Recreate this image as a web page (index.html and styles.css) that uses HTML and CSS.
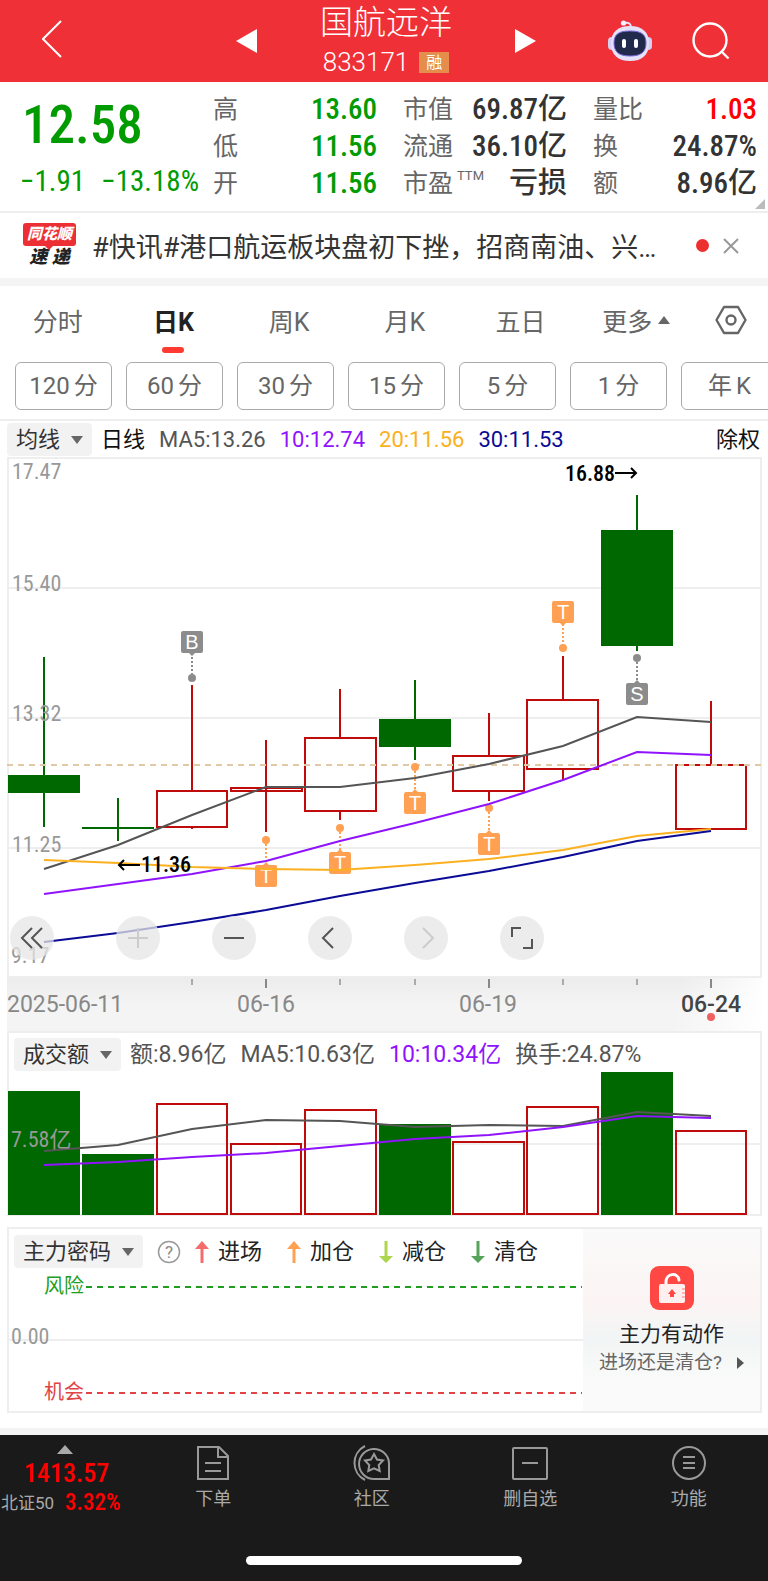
FILE: index.html
```html
<!DOCTYPE html>
<html lang="zh-CN">
<head>
  <meta charset="UTF-8">
  <meta name="viewport" content="width=device-width, initial-scale=1.0">
  <title>国航远洋 833171</title>
  <link rel="stylesheet" href="styles.css">
</head>
<body>
  <header class="topbar">
    <div class="topbar-left">
      <button class="icon-btn" aria-label="返回">
        <svg width="20" height="38" viewBox="0 0 20 38" fill="none" stroke="#fff" stroke-width="2"><path d="M19 1L1 19l18 18"/></svg>
      </button>
    </div>
    <div class="switcher">
      <button class="icon-btn" aria-label="上一只">
        <svg width="21" height="24" viewBox="0 0 21 24" fill="#fff"><path d="M21 0v24L0 12z"/></svg>
      </button>
      <div class="stock">
        <h1>国航远洋</h1>
        <p>833171 <span class="badge">融</span></p>
      </div>
      <button class="icon-btn" aria-label="下一只">
        <svg width="21" height="24" viewBox="0 0 21 24" fill="#fff"><path d="M0 0v24l21-12z"/></svg>
      </button>
    </div>
    <div class="topbar-right">
      <button class="icon-btn" aria-label="智能助手">
        <svg width="46" height="42" viewBox="0 0 46 42">
          <path d="M17 3c4-1 7 0 7 5" fill="none" stroke="#e6e3fa" stroke-width="2"/>
          <circle cx="16.500" cy="3" r="2.600" fill="#f5f3ff"/>
          <rect x="1" y="17" width="8" height="13" rx="4" fill="#d5d0f2"/>
          <rect x="37" y="17" width="8" height="13" rx="4" fill="#d5d0f2"/>
          <path d="M23 6c12 0 19 6 19 17 0 12-7 18-19 18S4 35 4 23C4 12 11 6 23 6z" fill="#e4e1f8"/>
          <path d="M23 11c11 0 16 3 16 12s-5 13-16 13S7 32 7 23s5-12 16-12z" fill="#222a4c" stroke="#7767d8"/>
          <rect x="15" y="19" width="4" height="9" rx="2" fill="#fff"/>
          <rect x="27" y="19" width="4" height="9" rx="2" fill="#fff"/>
        </svg>
      </button>
      <button class="icon-btn" aria-label="搜索">
        <svg width="38" height="38" viewBox="0 0 38 38" fill="none" stroke="#fff" stroke-width="2.400"><circle cx="18" cy="18" r="16.500"/><path d="M29 29l7.500 7.500"/></svg>
      </button>
    </div>
  </header>

  <section class="quote">
    <div class="price green">
      <strong>12.58</strong>
      <p><span>−1.91</span><span>−13.18%</span></p>
    </div>
    <dl class="stats">
      <div><dt>高</dt><dd class="green">13.60</dd></div>
      <div><dt>市值</dt><dd>69.87亿</dd></div>
      <div><dt>量比</dt><dd class="red">1.03</dd></div>
      <div><dt>低</dt><dd class="green">11.56</dd></div>
      <div><dt>流通</dt><dd>36.10亿</dd></div>
      <div><dt>换</dt><dd>24.87%</dd></div>
      <div><dt>开</dt><dd class="green">11.56</dd></div>
      <div><dt>市盈<sup>TTM</sup></dt><dd>亏损</dd></div>
      <div><dt>额</dt><dd>8.96亿</dd></div>
    </dl>
  </section>

  <section class="news">
    <div class="news-logo"><span class="logo-top">同花顺</span><span class="logo-bottom">速 递</span></div>
    <a href="#">#快讯#港口航运板块盘初下挫，招商南油、兴…</a>
    <span class="news-dot"></span>
    <button class="icon-btn" aria-label="关闭">
      <svg width="16" height="16" viewBox="0 0 16 16" stroke="#999" stroke-width="2"><path d="M1 1l14 14M15 1L1 15"/></svg>
    </button>
  </section>

  <nav class="tabs">
    <button>分时</button>
    <button class="active">日K</button>
    <button>周K</button>
    <button>月K</button>
    <button>五日</button>
    <button>更多<i class="up"></i></button>
    <button aria-label="设置">
      <svg width="32" height="30" viewBox="0 0 32 30" fill="none" stroke="#666" stroke-width="2.400"><path d="M9 2h14l7.500 13L23 28H9L1.500 15z" stroke-linejoin="round"/><circle cx="16" cy="15" r="4.500"/></svg>
    </button>
  </nav>

  <div class="periods">
    <button>120<span>分</span></button>
    <button>60<span>分</span></button>
    <button>30<span>分</span></button>
    <button>15<span>分</span></button>
    <button>5<span>分</span></button>
    <button>1<span>分</span></button>
    <button>年<span>K</span></button>
  </div>

  <div class="legend ma-legend">
    <label class="picker"><select aria-label="主图指标"><option>均线</option></select></label>
    <b>日线</b>
    <span>MA5:13.26</span>
    <span class="purple">10:12.74</span>
    <span class="orange">20:11.56</span>
    <span class="navy">30:11.53</span>
    <a href="#">除权</a>
  </div>

  <section class="panel kline">
    <svg class="chart" viewBox="7 457 755 521">
      <g class="grid"><path d="M8 588H761M8 718H761M8 848H761"/></g>
      <g class="axis-text">
        <text x="12" y="479">17.47</text>
        <text x="12" y="591">15.40</text>
        <text x="12" y="852">11.25</text>
        <text x="11" y="963">9.17</text>
      </g>
      <g class="fall">
        <path d="M44 657V827M118 798V841M415 680V760M637 495V651M82 828H154"/>
        <rect x="8" y="775" width="72" height="18"/>
        <rect x="379" y="719" width="72" height="28"/>
        <rect x="601" y="530" width="72" height="116"/>
      </g>
      <g class="rise">
        <path d="M192 685V790M192 827V829M266 740V832M340 689V738M340 811V820M489 713V756M489 791V801M563 656V700M563 769V780M711 701V765"/>
        <rect x="157" y="791" width="70" height="36"/>
        <rect x="231" y="788" width="71" height="3"/>
        <rect x="305" y="738" width="71" height="73"/>
        <rect x="453" y="756" width="71" height="35"/>
        <rect x="527" y="700" width="71" height="69"/>
        <rect x="676" y="765" width="70" height="64"/>
      </g>
      <text class="axis-label" x="12" y="721">13.32</text>
      <path class="last-price" d="M7 765H761"/>

      <g class="marks">
        <g class="mark-gray">
          <path d="M192 653V674"/><circle cx="192" cy="678" r="4"/><path class="box" d="M183 631h18q2 0 2 2v18q0 2-2 2h-6l-3 3-3-3h-6q-2 0-2-2v-18q0-2 2-2z"/><text x="192" y="649">B</text>
          <path d="M637 662V683"/><circle cx="637" cy="658" r="4"/><path class="box" d="M628 705h18q2 0 2-2v-18q0-2-2-2h-6l-3-3-3 3h-6q-2 0-2 2v18q0 2 2 2z"/><text x="637" y="701">S</text>
        </g>
        <g class="mark-orange">
          <path d="M563 624V645"/><circle cx="563" cy="648" r="4"/><path class="box" d="M554 601h18q2 0 2 2v18q0 2-2 2h-6l-3 3-3-3h-6q-2 0-2-2v-18q0-2 2-2z"/><text x="563" y="619">T</text>
          <path d="M266 844V865"/><circle cx="266" cy="840" r="4"/><path class="box" d="M257 887h18q2 0 2-2v-18q0-2-2-2h-6l-3-3-3 3h-6q-2 0-2 2v18q0 2 2 2z"/><text x="266" y="883">T</text>
          <path d="M340 832V853"/><circle cx="340" cy="828" r="4"/><path class="box" d="M331 874h18q2 0 2-2v-18q0-2-2-2h-6l-3-3-3 3h-6q-2 0-2 2v18q0 2 2 2z"/><text x="340" y="870">T</text>
          <path d="M415 771V792"/><circle cx="415" cy="767" r="4"/><path class="box" d="M406 814h18q2 0 2-2v-18q0-2-2-2h-6l-3-3-3 3h-6q-2 0-2 2v18q0 2 2 2z"/><text x="415" y="810">T</text>
          <path d="M489 812V833"/><circle cx="489" cy="808" r="4"/><path class="box" d="M480 855h18q2 0 2-2v-18q0-2-2-2h-6l-3-3-3 3h-6q-2 0-2 2v18q0 2 2 2z"/><text x="489" y="851">T</text>
        </g>
      </g>

      <g class="lines">
        <polyline class="ma5" points="44,869 118,845 192,815 266,787 340,787 415,778 489,764 563,746 637,717 711,722"/>
        <polyline class="ma10" points="44,894 118,884 192,874 266,861 340,841 415,823 489,804 563,780 637,752 711,755"/>
        <polyline class="ma20" points="44,860 118,863 192,867 266,869 340,870 415,865 489,859 563,850 637,836 711,829"/>
        <polyline class="ma30" points="44,942 118,933 192,922 266,910 340,896 415,883 489,871 563,857 637,841 711,831"/>
      </g>

      <g class="extreme">
        <text x="565" y="481">16.88</text><path d="M615 473H636M631 468l5 5-5 5"/>
        <text x="141" y="872">11.36</text><path d="M140 865H119M124 860l-5 5 5 5"/>
      </g>
    </svg>
    <div class="tools">
      <button aria-label="最早"><svg width="24" height="24" viewBox="0 0 24 24"><path d="M12 2L2 12l10 10M22 2L12 12l10 10"/></svg></button>
      <button aria-label="放大" disabled><svg width="24" height="24" viewBox="0 0 24 24"><path d="M2 12h20M12 2v20"/></svg></button>
      <button aria-label="缩小"><svg width="24" height="24" viewBox="0 0 24 24"><path d="M2 12h20"/></svg></button>
      <button aria-label="左移"><svg width="24" height="24" viewBox="0 0 24 24"><path d="M15 2L5 12l10 10"/></svg></button>
      <button aria-label="右移" disabled><svg width="24" height="24" viewBox="0 0 24 24"><path d="M9 2l10 10L9 22"/></svg></button>
      <button aria-label="全屏"><svg width="24" height="24" viewBox="0 0 24 24"><path d="M2 11V2h9M22 13v9h-9"/></svg></button>
    </div>
  </section>

  <div class="dates">
    <svg class="chart" viewBox="7 978 755 53">
      <path class="tick" d="M192 979v6M340 979v6M415 979v6M563 979v6M637 979v6"/>
      <path class="tick-major" d="M266 979v9M489 979v9M711 979v9"/>
      <text x="7" y="1012">2025-06-11</text>
      <text x="266" y="1012" text-anchor="middle">06-16</text>
      <text x="488" y="1012" text-anchor="middle">06-19</text>
      <text class="today" x="711" y="1012" text-anchor="middle">06-24</text>
      <circle cx="711" cy="1017" r="4"/>
    </svg>
  </div>

  <section class="panel volume">
    <div class="legend">
      <label class="picker"><select aria-label="副图指标"><option>成交额</option></select></label>
      <span>额:8.96亿</span>
      <span>MA5:10.63亿</span>
      <span class="purple">10:10.34亿</span>
      <span>换手:24.87%</span>
    </div>
    <svg class="chart" viewBox="7 1071 755 145">
      <g class="grid"><path d="M8 1144H761"/></g>
      <g class="fall">
        <rect x="8" y="1091" width="72" height="124"/>
        <rect x="82" y="1154" width="72" height="61"/>
        <rect x="379" y="1124" width="72" height="91"/>
        <rect x="601" y="1072" width="72" height="143"/>
      </g>
      <g class="rise">
        <rect x="157" y="1104" width="70" height="110"/>
        <rect x="231" y="1144" width="70" height="70"/>
        <rect x="305" y="1110" width="71" height="104"/>
        <rect x="453" y="1142" width="71" height="72"/>
        <rect x="527" y="1107" width="71" height="107"/>
        <rect x="676" y="1131" width="70" height="83"/>
      </g>
      <g class="lines">
        <polyline class="ma5" points="44,1151 118,1145 192,1129 266,1120 340,1121 415,1127 489,1125 563,1126 637,1112 711,1116"/>
        <polyline class="ma10" points="44,1165 118,1162 192,1157 266,1153 340,1146 415,1139 489,1135 563,1127 637,1116 711,1118"/>
      </g>
      <text class="axis-label" x="11" y="1147">7.58亿</text>
    </svg>
  </section>

  <section class="panel force">
    <div class="force-main">
      <div class="legend">
        <label class="picker"><select aria-label="资金指标"><option>主力密码</option></select></label>
        <svg width="24" height="24" viewBox="0 0 24 24"><circle cx="12" cy="12" r="10.500" fill="none" stroke="#999" stroke-width="1.500"/><text x="12" y="18" class="help">?</text></svg>
        <ul class="signals">
          <li><svg width="14" height="22" viewBox="0 0 14 22" fill="#f56c6c"><path d="M7 0l7 8H8.500v14h-3V8H0z"/></svg>进场</li>
          <li><svg width="14" height="22" viewBox="0 0 14 22" fill="#ffa052"><path d="M7 0l7 8H8.500v14h-3V8H0z"/></svg>加仓</li>
          <li><svg width="14" height="22" viewBox="0 0 14 22" fill="#add54d"><path d="M7 22l7-7H8.500V0h-3v15H0z"/></svg>减仓</li>
          <li><svg width="14" height="22" viewBox="0 0 14 22" fill="#57a35b"><path d="M7 22l7-7H8.500V0h-3v15H0z"/></svg>清仓</li>
        </ul>
      </div>
      <svg class="chart" viewBox="7 1268 576 145">
        <g class="grid"><path d="M8 1340H583"/></g>
        <text class="axis-label" x="11" y="1344">0.00</text>
        <g class="risk"><text x="44" y="1293">风险</text><path d="M86 1287H582"/></g>
        <g class="chance"><text x="44" y="1399">机会</text><path d="M86 1393H582"/></g>
      </svg>
    </div>
    <a href="#" class="promo">
      <svg width="46" height="46" viewBox="0 0 46 46">
        <rect x="1" y="1" width="44" height="44" rx="9" fill="#ff4743"/>
        <path d="M17 20v-3C17 8 29 7 30 15" fill="none" stroke="#fff" stroke-width="3" stroke-linecap="round"/>
        <rect x="10" y="19" width="26" height="19" rx="2" fill="#fff0ef"/>
        <path d="M23 24l4 5h-2v3h-4v-3h-2z" fill="#ff4743"/>
        <path d="M33 24h3M33 28h3M33 32h3" stroke="#ffb7b4" stroke-width="2"/>
      </svg>
      <strong>主力有动作</strong>
      <span>进场还是清仓?<i class="next"></i></span>
    </a>
  </section>

  <footer class="bottombar">
    <div class="bottom-nav">
      <a href="#" class="index">
        <i class="up"></i>
        <strong>1413.57</strong>
        <span>北证50<b>3.32%</b></span>
      </a>
      <a href="#">
        <svg width="36" height="36" viewBox="0 0 36 36"><path d="M3 2h21l9 9v23H3zM23 2v10h10M10 18h16M10 26h16"/></svg>
        下单
      </a>
      <a href="#">
        <svg width="38" height="36" viewBox="0 0 38 36"><path d="M36 34V18A15 15 0 1 0 21 34zM12 1A19 19 0 0 0 12 35"/><path d="M21 9l3 5.500 6 1-4.300 4.500 1 6-5.700-2.700-5.700 2.700 1-6-4.300-4.500 6-1z"/></svg>
        社区
      </a>
      <a href="#">
        <svg width="36" height="36" viewBox="0 0 36 36"><rect x="1" y="3" width="34" height="31" rx="1"/><path d="M10 18h16"/></svg>
        删自选
      </a>
      <a href="#">
        <svg width="36" height="36" viewBox="0 0 36 36"><circle cx="18" cy="18" r="16"/><path d="M12 12h12M12 18h12M12 23h12"/></svg>
        功能
      </a>
    </div>
    <div class="home-bar"></div>
  </footer>
</body>
</html>
```
FILE: styles.css
```css
* {
  box-sizing: border-box;
}
body {
  margin: 0;
  background-color: #fff;
  color: #333;
  font-family: Roboto, "Noto Sans CJK SC", sans-serif;
  overflow-x: hidden;
}
h1, p, dl, dd, ul {
  margin: 0;
  padding: 0;
}
button, select {
  font: inherit;
  color: inherit;
  border: 0;
  padding: 0;
  background: none;
}
a {
  color: inherit;
  text-decoration: none;
}
svg {
  display: block;
}
.green { color: #009b00; }
.red { color: #f00; }
.purple { color: #9013fe; }
.orange { color: #fbb020; }
.navy { color: #0b0b96; }

/* top bar */
.topbar {
  display: grid;
  grid-template-columns: 1fr 300px 1fr;
  align-items: center;
  height: 82px;
  padding: 0 38px 0 42px;
  background-color: #f03037;
  color: #fff;
}
.switcher {
  display: flex;
  justify-content: space-between;
  align-items: center;
}
.stock {
  text-align: center;
}
.stock h1 {
  padding-top: 3px;
  font-size: 33px;
  font-weight: 300;
  line-height: 40px;
}
.stock p {
  display: flex;
  justify-content: center;
  align-items: center;
  gap: 10px;
  font-size: 26px;
  font-weight: 300;
  line-height: 39px;
}
.badge {
  padding: 0 7px;
  background-color: #e58d4a;
  font-size: 16px;
  font-weight: 400;
  line-height: 21px;
}
.topbar-right {
  display: flex;
  justify-content: flex-end;
  align-items: center;
  gap: 39px;
}

/* quote */
.quote {
  display: flex;
  position: relative;
  height: 131px;
  padding: 9px 11px 0 0;
  border-bottom: 2px solid #eee;
}
.quote::after {
  content: '';
  position: absolute;
  right: 3px;
  bottom: 2px;
  border: 5px solid;
  border-color: transparent #bbb #bbb transparent;
}
.price {
  width: 213px;
  padding: 0 14px 0 20px;
  font-family: "Roboto Condensed", "Noto Sans CJK SC", sans-serif;
}
.price strong {
  display: block;
  padding-left: 2px;
  font-size: 53px;
  font-weight: 500;
  line-height: 69px;
}
.price p {
  display: flex;
  justify-content: space-between;
  font-size: 29px;
  line-height: 43px;
}
.stats {
  flex: 1;
  display: grid;
  grid-template-columns: repeat(3, 1fr);
  grid-auto-rows: 37px;
  column-gap: 26px;
}
.stats div {
  display: flex;
  justify-content: space-between;
  line-height: 37px;
}
.stats dt {
  color: #666;
  font-size: 25px;
}
.stats dd {
  font-family: "Roboto Condensed", "Noto Sans CJK SC", sans-serif;
  font-size: 29px;
  font-weight: 500;
}
.stats sup {
  margin-left: 4px;
  font-size: 13px;
  line-height: 1;
  vertical-align: 12px;
}

/* news */
.news {
  display: flex;
  align-items: center;
  height: 73px;
  padding: 0 29px 0 23px;
  border-bottom: 8px solid #f4f4f4;
}
.news-logo {
  display: flex;
  flex-direction: column;
  align-items: center;
  margin-right: 16px;
  font-weight: 900;
  font-style: italic;
}
.logo-top {
  position: relative;
  padding: 0 4px;
  border-radius: 3px;
  background-color: #ec2f34;
  color: #fff;
  font-size: 15px;
  line-height: 23px;
}
.logo-top::after {
  content: '';
  position: absolute;
  top: 23px;
  left: 22px;
  border: 4px solid transparent;
  border-top-color: #ec2f34;
}
.logo-bottom {
  color: #222;
  font-size: 18px;
  line-height: 22px;
}
.news a {
  flex: 1;
  overflow: hidden;
  white-space: nowrap;
  font-size: 27px;
}
.news-dot {
  width: 13px;
  height: 13px;
  margin-right: 14px;
  border-radius: 50%;
  background-color: #ec2f2f;
}

/* tabs */
.tabs {
  display: grid;
  grid-template-columns: repeat(6, 1fr) 74px;
  height: 76px;
  color: #666;
  font-size: 25px;
}
.tabs button {
  display: flex;
  position: relative;
  justify-content: center;
  align-items: center;
  height: 67px;
}
.tabs .active {
  color: #222;
  font-weight: 700;
}
.tabs .active::after {
  content: '';
  position: absolute;
  bottom: 0;
  width: 22px;
  height: 6px;
  border-radius: 3px;
  background-color: #ff3a30;
}
.up {
  margin-left: 6px;
  border: 6px solid transparent;
  border-top: 0;
  border-bottom: 8px solid #666;
}
.periods {
  display: flex;
  gap: 14px;
  padding: 0 0 9px 15px;
  overflow: hidden;
  border-bottom: 2px solid #eee;
}
.periods button {
  flex: 0 0 97px;
  height: 48px;
  border: 1px solid #aaa;
  border-radius: 6px;
  color: #666;
  font-size: 24px;
  line-height: 44px;
}
.periods span {
  margin-left: 4px;
}

/* legends */
.legend {
  display: flex;
  align-items: center;
  gap: 14px;
  color: #555;
  font-size: 23px;
  line-height: 33px;
  white-space: nowrap;
}
.ma-legend {
  padding: 2px 8px 1px 7px;
  font-size: 22px;
}
.ma-legend b, .ma-legend a {
  color: #111;
  font-size: 22px;
  font-weight: 400;
}
.ma-legend a {
  margin-left: auto;
}
.picker {
  position: relative;
  border-radius: 4px;
  background-color: #f2f2f2;
}
.picker::after {
  content: '';
  position: absolute;
  top: 13px;
  right: 9px;
  border: 6px solid transparent;
  border-top: 8px solid #666;
  border-bottom: 0;
}
.picker select {
  display: block;
  appearance: none;
  height: 33px;
  padding: 0 31px 0 9px;
  color: #333;
  font-size: 22px;
}
.ma-legend .picker, .volume .picker {
  margin-right: -5px;
}

/* panels and charts */
.panel {
  position: relative;
  margin: 0 6px 0 7px;
  box-shadow: inset 0 0 0 2px #eee;
}
.panel .legend {
  padding: 7px 0 0 7px;
}
.chart {
  width: 100%;
  height: auto;
}
.grid {
  stroke: #eee;
  stroke-width: 2;
}
.axis-text, .axis-label {
  fill: #999;
  font-family: "Roboto Condensed", "Noto Sans CJK SC", sans-serif;
  font-size: 22px;
}
.fall {
  fill: #006800;
  stroke: none;
}
.fall path {
  stroke: #006800;
  stroke-width: 2;
}
.rise {
  fill: none;
  stroke: #c00b0b;
  stroke-width: 2;
}
.last-price {
  stroke: #e3caa6;
  stroke-width: 2;
  stroke-dasharray: 6 5;
}
.lines {
  fill: none;
  stroke-width: 2;
}
.ma5 { stroke: #555; }
.ma10 { stroke: #9013fe; }
.ma20 { stroke: #fbb020; }
.ma30 { stroke: #0b0b96; }
.marks path {
  stroke-width: 2;
  stroke-dasharray: 2 2;
}
.marks .box {
  stroke: none;
}
.marks text {
  fill: #fff;
  font-family: "Liberation Sans", sans-serif;
  font-size: 20px;
  text-anchor: middle;
}
.mark-gray {
  fill: #8c8c8c;
  stroke: #8c8c8c;
}
.mark-orange {
  fill: #ffa052;
  stroke: #ffa052;
}
.marks text, .marks circle {
  stroke: none;
}
.extreme path {
  fill: none;
  stroke: #000;
  stroke-width: 2;
}
.extreme text {
  font-family: "Roboto Condensed", sans-serif;
  font-size: 22px;
  font-weight: 500;
}
.tools {
  display: flex;
  position: absolute;
  left: 3px;
  bottom: 18px;
  gap: 52px;
}
.tools button {
  display: grid;
  place-items: center;
  width: 44px;
  height: 44px;
  border-radius: 50%;
  background-color: rgba(230, 230, 230, 0.75);
}
.tools button:first-child {
  margin-right: 10px;
}
.tools svg {
  fill: none;
  stroke: #555;
  stroke-width: 2;
}
.tools button:disabled svg {
  stroke: #ccc;
}
.dates {
  margin: 0 6px 0 7px;
  background: linear-gradient(100deg, transparent 88%, #fff), linear-gradient(#ececec, #f4f4f4 50%);
}
.dates text {
  fill: #888;
  font-size: 23px;
}
.dates .today {
  fill: #444;
  font-weight: 500;
}
.dates circle {
  fill: #f06060;
}
.tick {
  stroke: #aaa;
  stroke-width: 2;
}
.tick-major {
  stroke: #888;
  stroke-width: 2;
}
.volume {
  margin-bottom: 11px;
}

/* main force panel */
.force {
  display: grid;
  grid-template-columns: 1fr 179px;
  margin-bottom: 15px;
}
.force .legend {
  padding-top: 8px;
}
.help {
  fill: #888;
  font-size: 17px;
  text-anchor: middle;
}
.signals {
  display: flex;
  gap: 25px;
  color: #222;
  font-size: 22px;
  list-style: none;
}
.signals li {
  display: flex;
  align-items: center;
  gap: 9px;
}
.risk, .chance {
  font-size: 20px;
}
.risk path, .chance path {
  stroke-width: 2;
  stroke-dasharray: 6 5;
}
.risk { fill: #1f9d1f; }
.risk path { stroke: #1f9d1f; }
.chance { fill: #e04444; }
.chance path { stroke: #e04444; }
.promo {
  display: flex;
  flex-direction: column;
  align-items: center;
  margin: 2px 2px 2px 0;
  padding-top: 36px;
  background: linear-gradient(#fafafa, #fcf4f4 40%, #f2f5f5 60%, #fafafa 85%);
}
.promo strong {
  margin-top: 7px;
  color: #222;
  font-size: 21px;
  font-weight: 400;
  line-height: 32px;
}
.promo span {
  display: flex;
  align-items: center;
  color: #666;
  font-size: 19px;
  line-height: 25px;
}
.next {
  margin-left: 15px;
  border: 6px solid transparent;
  border-right: 0;
  border-left: 7px solid #555;
}

/* bottom bar */
.bottombar {
  height: 153px;
  border-top: 7px solid #f4f4f4;
  background-color: #1a1a1a;
  color: #aaa;
}
.bottom-nav {
  display: grid;
  grid-template-columns: 134px repeat(4, 1fr);
  height: 121px;
}
.bottom-nav a {
  display: flex;
  flex-direction: column;
  align-items: center;
  padding-top: 10px;
  font-size: 18px;
  line-height: 36px;
}
.bottom-nav svg {
  fill: none;
  stroke: #999;
  stroke-width: 2;
}
.bottom-nav .index {
  align-items: flex-start;
  padding-left: 1px;
}
.index .up {
  margin-left: 56px;
  border-width: 0 8px 9px;
  border-bottom-color: #aaa;
}
.index strong {
  padding-left: 23px;
  color: #f00;
  font-family: "Roboto Condensed", sans-serif;
  font-size: 26px;
  font-weight: 500;
  line-height: 38px;
}
.index span {
  display: flex;
  align-items: center;
  font-size: 17px;
  line-height: 22px;
}
.index b {
  margin-left: 11px;
  color: #f00;
  font-family: "Roboto Condensed", sans-serif;
  font-size: 23px;
  font-weight: 500;
}
.home-bar {
  width: 36%;
  height: 9px;
  margin: 0 auto;
  border-radius: 5px;
  background-color: #fff;
}
```
